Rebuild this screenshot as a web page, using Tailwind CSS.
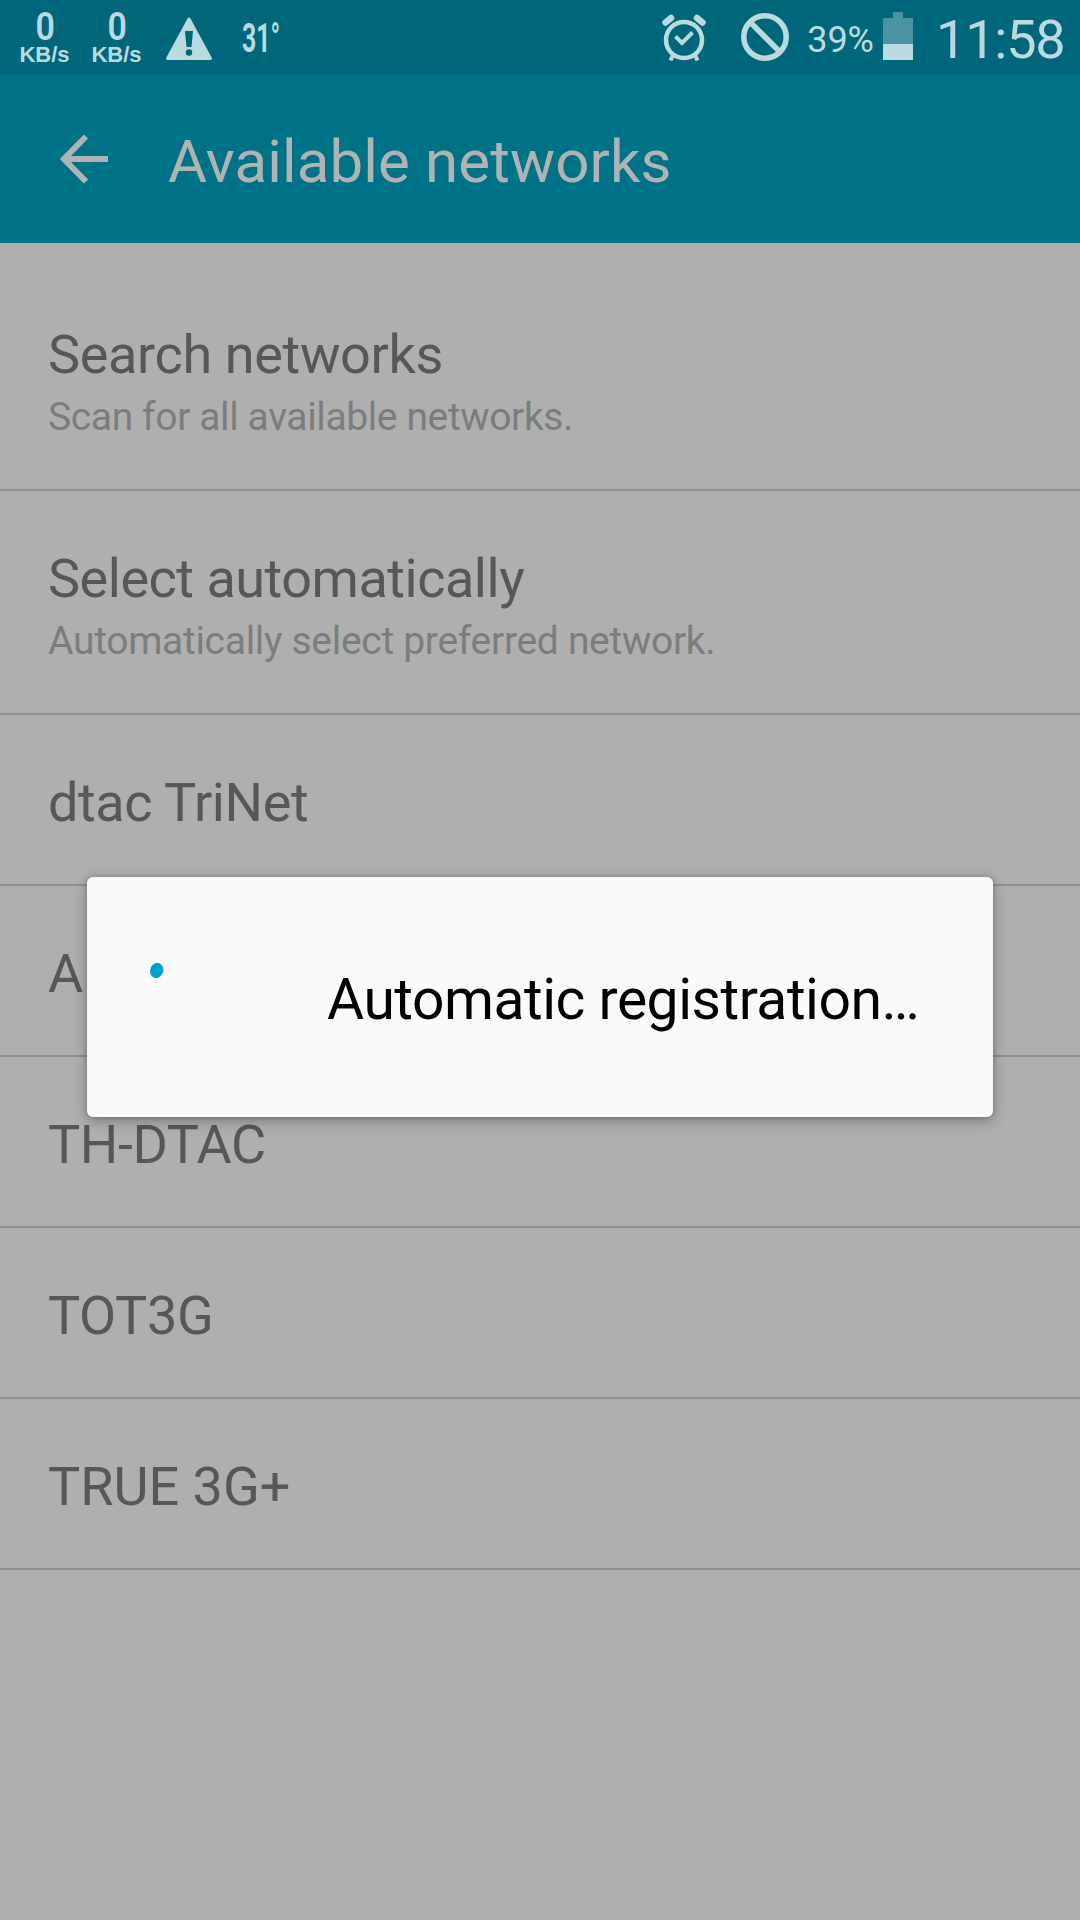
<!DOCTYPE html>
<html lang="en">
<head>
<meta charset="utf-8">
<title>Available networks</title>
<script src="https://cdn.jsdelivr.net/npm/@tailwindcss/browser@4"></script>
</head>
<body class="bg-[#afafaf] font-['Roboto',sans-serif]">
<div class="relative flex h-[1920px] w-[1080px] flex-col overflow-hidden">
  <!-- Status bar -->
  <header class="flex h-[75px] items-start justify-between bg-[#00667a] text-[#bbdae0]">
    <div class="flex items-start pl-[19px]">
      <div class="flex w-[52px] flex-col items-center pt-[10px]">
        <span class="scale-x-[0.87] text-[39px]/[35px] font-semibold">0</span>
        <span class="-ml-[1px] font-['Liberation_Sans',sans-serif] text-[22px]/[20px] font-bold">KB/s</span>
      </div>
      <div class="ml-[20px] flex w-[52px] flex-col items-center pt-[10px]">
        <span class="scale-x-[0.87] text-[39px]/[35px] font-semibold">0</span>
        <span class="-ml-[1px] font-['Liberation_Sans',sans-serif] text-[22px]/[20px] font-bold">KB/s</span>
      </div>
      <svg class="ml-[22px] mt-[16px] h-[46px] w-[48px]" viewBox="0 0 48 46"><path d="M24 3 45.500 42.500H2.500Z" fill="#bbdae0" stroke="#bbdae0" stroke-width="3" stroke-linejoin="round"/><path d="M20 15h8l-1.500 16h-5z" fill="#00667a"/><circle cx="24" cy="36.500" r="3.200" fill="#00667a"/></svg>
      <span class="ml-[29px] mt-[17px] origin-left scale-x-[0.62] text-[40px]/[44px] font-bold">31°</span>
    </div>
    <div class="flex items-start">
      <svg class="mt-[13px] h-[50px] w-[46px]" viewBox="0 0 46 50" fill="none" stroke="#bbdae0"><circle cx="23" cy="27" r="18" stroke-width="4.500"/><path d="M14.500 23.500 21 30 31.500 19.500" stroke-width="4"/><path d="M4.500 9.500 10 5M41.500 9.500 36 5" stroke-width="6.500" stroke-linecap="round"/><path d="M9.500 47.500 12 42M36.500 47.500 34 42" stroke-width="4"/></svg>
      <svg class="ml-[33px] mt-[12px] h-[50px] w-[50px]" viewBox="0 0 50 50" fill="none" stroke="#bbdae0" stroke-width="5.500"><circle cx="25" cy="25" r="21.200"/><path d="M10 10 40 40"/></svg>
      <span class="ml-[17px] mt-[18px] text-[36px]/[44px]">39%</span>
      <svg class="ml-[9px] mt-[12px] h-[48px] w-[30px]" viewBox="0 0 30 48"><path d="M10 0h10v6h10v26H0V6h10z" fill="#4a94a1"/><path d="M0 32h30v16H0z" fill="#bbdae0"/></svg>
      <span class="ml-[23px] mt-[8px] w-[144px] text-[54px]/[64px] tracking-[-1.2px]">11:58</span>
    </div>
  </header>

  <!-- App bar -->
  <div class="flex h-[168px] items-center bg-[#007286] pl-[60px] text-[#b0b3b4]">
    <svg class="h-[64px] w-[48px]" viewBox="0 0 48 64" fill="none" stroke="#b0b3b4"><path d="M26 9.500 4 32 26 54.500" stroke-width="6"/><path d="M4 32h44" stroke-width="6"/></svg>
    <h1 class="ml-[60px] pt-[5px] text-[60px]/[70px] tracking-[0.13px]">Available networks</h1>
  </div>

  <!-- Network list -->
  <ul class="pt-[24px] text-[54px]/[64px] text-[#575757]">
    <li class="h-[224px] border-b-2 border-[#8f8f8f] px-[48px] pt-[56px]">
      <p class="tracking-[-0.35px]">Search networks</p>
      <p class="mt-[7px] text-[39px]/[46px] tracking-[-0.38px] text-[#7b7d7d]">Scan for all available networks.</p>
    </li>
    <li class="h-[224px] border-b-2 border-[#8f8f8f] px-[48px] pt-[56px]">
      <p class="tracking-[-0.48px]">Select automatically</p>
      <p class="mt-[7px] text-[39px]/[46px] tracking-[-0.3px] text-[#7b7d7d]">Automatically select preferred network.</p>
    </li>
    <li class="h-[171px] border-b-2 border-[#8f8f8f] px-[48px] pt-[56px] tracking-[-0.4px]">dtac TriNet</li>
    <li class="h-[171px] border-b-2 border-[#8f8f8f] px-[48px] pt-[56px]">A</li>
    <li class="h-[171px] border-b-2 border-[#8f8f8f] px-[48px] pt-[56px] tracking-[-0.4px]">TH-DTAC</li>
    <li class="h-[171px] border-b-2 border-[#8f8f8f] px-[48px] pt-[56px] tracking-[-0.4px]">TOT3G</li>
    <li class="h-[171px] border-b-2 border-[#8f8f8f] px-[48px] pt-[56px]">TRUE 3G+</li>
  </ul>

  <!-- Progress dialog -->
  <div class="absolute left-[87px] top-[877px] flex h-[240px] w-[906px] items-center rounded-[6px] bg-[#fafafa] pl-[62px] shadow-[0_4px_14px_rgba(0,0,0,0.3),0_0_4px_rgba(0,0,0,0.2)]">
    <svg class="h-[68px] w-[120px]" viewBox="0 0 120 68"><ellipse cx="7.700" cy="7.500" rx="6.500" ry="7.700" fill="#049fcc" transform="rotate(20 7.700 7.500)"/></svg>
    <p class="ml-[58px] pt-[5px] text-[57px]/[68px] tracking-[-0.48px] text-black">Automatic registration…</p>
  </div>
</div>
</body>
</html>
